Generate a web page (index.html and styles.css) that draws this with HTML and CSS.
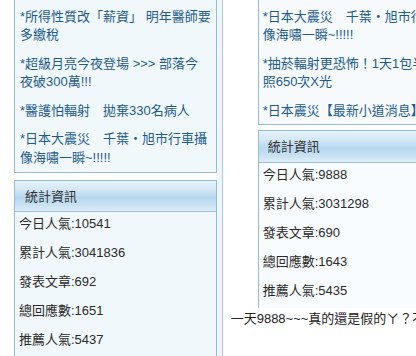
FILE: index.html
```html
<!DOCTYPE html>
<html lang="zh-Hant">
<head>
<meta charset="utf-8">
<link rel="stylesheet" href="styles.css">
</head>
<body>
<div class="page">
  <div class="col-left">
    <div class="box news">
      <div class="item">*所得性質改「薪資」 明年醫師要<br>多繳稅</div>
      <div class="item">*超級月亮今夜登場 &gt;&gt;&gt; 部落今<br>夜破300萬!!!</div>
      <div class="item">*醫護怕輻射　拋棄330名病人</div>
      <div class="item">*日本大震災　千葉‧旭市行車攝<br>像海嘯一瞬~!!!!!</div>
    </div>
    <div class="box stats">
      <div class="stats-head">統計資訊</div>
      <div class="row">今日人氣:10541</div>
      <div class="row">累計人氣:3041836</div>
      <div class="row">發表文章:692</div>
      <div class="row">總回應數:1651</div>
      <div class="row">推薦人氣:5437</div>
    </div>
  </div>
  <div class="strip"></div>
  <div class="col-right">
    <div class="box news news-r">
      <div class="item">*日本大震災　千葉‧旭市行車攝影<br>像海嘯一瞬~!!!!!</div>
      <div class="item">*抽菸輻射更恐怖！1天1包半年等於<br>照650次X光</div>
      <div class="item">*日本震災【最新小道消息】</div>
    </div>
    <div class="box stats stats-r">
      <div class="stats-head">統計資訊</div>
      <div class="row">今日人氣:9888</div>
      <div class="row">累計人氣:3031298</div>
      <div class="row">發表文章:690</div>
      <div class="row">總回應數:1643</div>
      <div class="row">推薦人氣:5435</div>
    </div>
    <div class="comment">一天9888~~~真的還是假的ㄚ？不會吧</div>
  </div>
</div>
</body>
</html>
```

FILE: styles.css
```css
html, body {
  margin: 0;
  padding: 0;
  background: #ffffff;
}
body {
  width: 416px;
  height: 356px;
  overflow: hidden;
  font-family: "Liberation Sans", "Noto Sans CJK TC", sans-serif;
  font-size: 13px;
  color: #2a2a2a;
}
.page {
  display: flex;
  width: 416px;
  height: 356px;
  overflow: hidden;
}
.col-left {
  flex: 0 0 200px;
  padding-left: 14px;
}
.strip {
  flex: 0 0 5px;
  background: #eef6fb;
  border-right: 1px solid #a8cde0;
}
.col-right {
  flex: 1 1 auto;
  min-width: 0;
  overflow: hidden;
}
.box {
  border: 1px solid #93bdd4;
  background: #f1f8fc;
  box-sizing: border-box;
}
.news {
  margin-top: -8px;
  padding: 9.75px 5px 0 5px;
  white-space: nowrap;
}
.item {
  padding: 5px 0;
  line-height: 18.5px;
  color: #1d5b8c;
}
.stats {
  margin-top: 7px;
  height: 200px;
}
.stats-head {
  height: 30px;
  line-height: 32px;
  padding-left: 10px;
  color: #333333;
  border-bottom: 1px solid #9dc3da;
  background: linear-gradient(to bottom, #e6f2fa 0%, #d2e7f5 30%, #b7d7ee 55%, #c9e1f2 80%, #deedf8 100%);
}
.row {
  padding: 3px 0 8px 4px;
  line-height: 18px;
}
.news-r {
  margin-left: 35px;
  width: 240px;
  padding-left: 4px;
  background: #f6fafd;
}
.news-r .item:last-child {
  padding-bottom: 4px;
}
.stats-r {
  margin-left: 35px;
  margin-top: 5px;
  width: 240px;
  height: auto;
  border-bottom: none;
  background: #f9fcfe;
}
.stats-r .stats-head {
  height: 31px;
  padding-left: 9px;
}
.stats-r .row {
  padding-left: 4px;
  padding-bottom: 8px;
}
.comment {
  padding-left: 8px;
  margin-top: 2px;
  line-height: 18px;
  white-space: nowrap;
  color: #222222;
}
```
